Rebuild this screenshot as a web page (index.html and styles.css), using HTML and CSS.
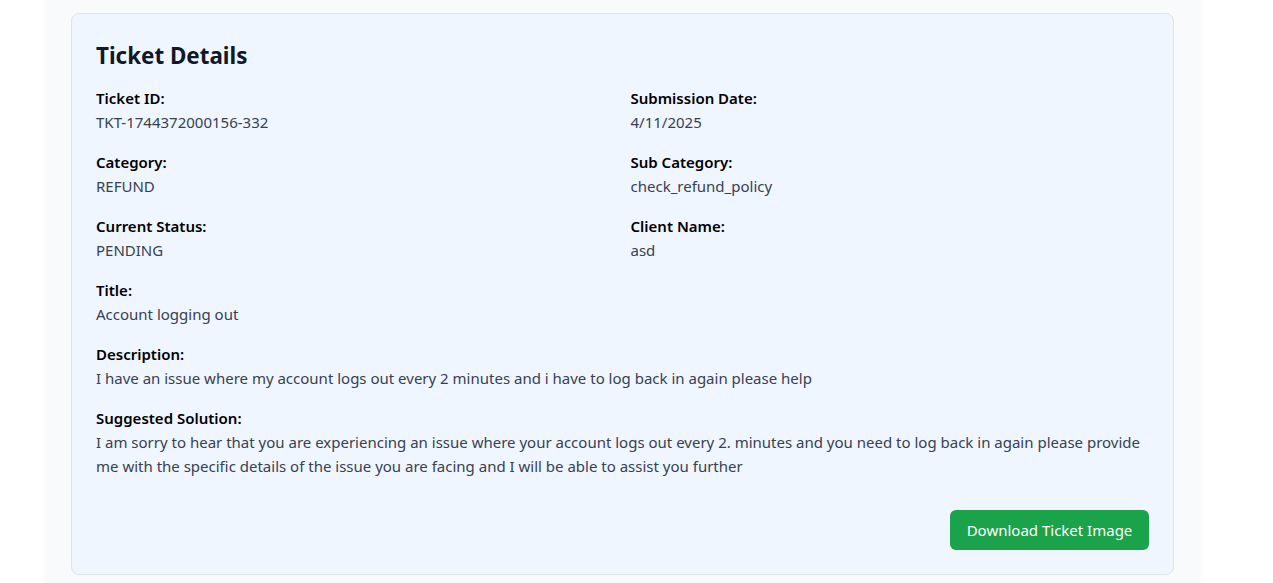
FILE: index.html
```html
<!DOCTYPE html>
<html>
<head>
<meta charset="utf-8">
<link rel="stylesheet" href="styles.css">
</head>
<body>
<div class="page">
  <div class="container">
    <div class="card">
      <h2 class="heading">Ticket Details</h2>
      <div class="grid">
        <div class="field"><div class="label">Ticket ID:</div><div class="value">TKT-1744372000156-332</div></div>
        <div class="field"><div class="label">Submission Date:</div><div class="value">4/11/2025</div></div>
        <div class="field"><div class="label">Category:</div><div class="value">REFUND</div></div>
        <div class="field"><div class="label">Sub Category:</div><div class="value">check_refund_policy</div></div>
        <div class="field"><div class="label">Current Status:</div><div class="value">PENDING</div></div>
        <div class="field"><div class="label">Client Name:</div><div class="value">asd</div></div>
        <div class="field full"><div class="label">Title:</div><div class="value">Account logging out</div></div>
        <div class="field full"><div class="label">Description:</div><div class="value">I have an issue where my account logs out every 2 minutes and i have to log back in again please help</div></div>
        <div class="field full"><div class="label">Suggested Solution:</div><div class="value">I am sorry to hear that you are experiencing an issue where your account logs out every 2. minutes and you need to log back in again please provide me with the specific details of the issue you are facing and I will be able to assist you further</div></div>
      </div>
      <div class="actions">
        <button class="btn">Download Ticket Image</button>
      </div>
    </div>
  </div>
</div>
</body>
</html>
```
FILE: styles.css
```css
html, body {
  margin: 0;
  padding: 0;
  background: #ffffff;
  font-family: "Noto Sans", "Open Sans", sans-serif;
}
.page {
  padding-left: 46px;
}
.container {
  width: 1153px;
  box-sizing: border-box;
  background: #f9fafb;
  box-shadow: 0 0 6px rgba(0,0,0,0.05);
  padding: 13px 25px 40px 25px;
  min-height: 620px;
}
.card {
  background: #eff6ff;
  border: 1px solid #dbe4f0;
  border-radius: 8px;
  padding: 24px 24px 24px 24px;
}
.heading {
  margin: 0 0 14px 0;
  padding-top: 2px;
  font-size: 22.4px;
  line-height: 32px;
  font-weight: 700;
  color: #111827;
}
.grid {
  display: grid;
  grid-template-columns: 1fr 1fr;
  column-gap: 16px;
  row-gap: 16px;
}
.full {
  grid-column: span 2;
}
.label {
  font-size: 15px;
  line-height: 24px;
  font-weight: 600;
  color: #000000;
}
.value {
  font-size: 15px;
  line-height: 24px;
  color: #374151;
}
.actions {
  display: flex;
  justify-content: flex-end;
  margin-top: 32px;
}
.btn {
  font-family: inherit;
  font-size: 15px;
  line-height: 24px;
  color: #ffffff;
  background: #1aa34a;
  border: none;
  border-radius: 6px;
  padding: 8px 16px;
  height: 40px;
  width: 199px;
}
```
